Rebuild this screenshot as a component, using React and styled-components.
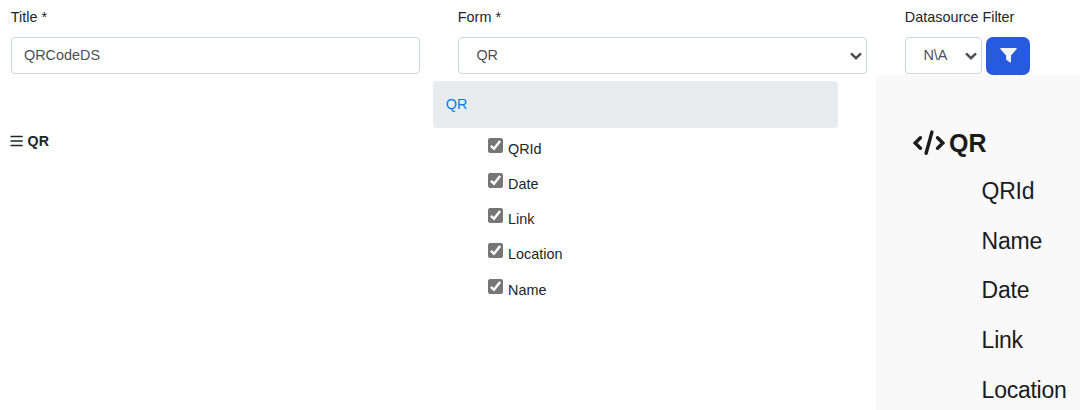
import React from 'react';
import styled, { createGlobalStyle } from 'styled-components';

const GlobalStyle = createGlobalStyle`
  * { box-sizing: border-box; }
  body {
    margin: 0;
    background: #fff;
    color: #212529;
    font: 14.4px/22px "Liberation Sans", Arial, sans-serif;
    overflow: hidden;
  }
  svg { display: block; flex: none; }
`;

const Page = styled.main`
  height: 410px;
  display: flex;
  flex-direction: column;
`;

const Toolbar = styled.header`
  height: 75px;
  padding: 6px 0 0 11px;
  display: grid;
  grid-template-columns: 447px 447px 1fr;
`;

const Field = styled.div`
  display: flex;
  flex-direction: column;
  gap: 9px;
`;

const Label = styled.label`
  height: 22px;
  margin-left: -0.2px;
`;

const Controls = styled.div`
  display: flex;
  gap: 4px;
`;

const TextInput = styled.input`
  width: 409px;
  height: 37px;
  padding: 0 12px 2px;
  border: 1px solid #ced4da;
  border-radius: 4px;
  background: #fff;
  color: #495057;
  font: inherit;
  outline: none;
`;

const SelectBox = styled.div`
  width: ${(p) => p.$width}px;
  height: 37px;
  display: grid;
  align-items: center;
  color: #495057;

  > * { grid-area: 1 / 1; }
  > svg {
    justify-self: end;
    margin-right: 5px;
    pointer-events: none;
  }
`;

const NativeSelect = styled.select`
  appearance: none;
  width: 100%;
  height: 37px;
  padding: 0 0 2px 17.4px;
  border: 1px solid #ced4da;
  border-radius: 4px;
  background: #fff;
  color: inherit;
  font: inherit;
  outline: none;
`;

const FilterButton = styled.button`
  width: 44px;
  height: 38px;
  padding: 0 0 1px;
  border: 0;
  border-radius: 7px;
  background: #265be0;
  color: #f4f4f4;
  display: flex;
  align-items: center;
  justify-content: center;
`;

const Body = styled.div`
  flex: 1;
  min-height: 0;
  display: grid;
  grid-template-columns: 433px 443px 1fr;
`;

const Outline = styled.section`
  padding: 55px 0 0 10px;
`;

const OutlineItem = styled.div`
  display: flex;
  align-items: center;
  gap: 4.6px;
  font-size: 14.2px;
  font-weight: 700;
`;

const FormFields = styled.section`
  padding-top: 6px;
`;

const FormHeader = styled.div`
  width: 405px;
  height: 47px;
  padding: 0 12.8px 2px;
  display: flex;
  align-items: center;
  border-radius: 4px;
  background: #e9ecef;
  color: #007bff;
`;

const CheckList = styled.div`
  padding: 10px 0 0 55px;
`;

const CheckRow = styled.label`
  height: 35.14px;
  display: flex;
  align-items: flex-start;
  gap: 5px;
`;

const CheckBoxWrap = styled.span`
  display: grid;
  width: 15px;
  height: 15px;

  > * { grid-area: 1 / 1; }
  > svg { pointer-events: none; visibility: hidden; }
  > input:checked + svg { visibility: visible; }
`;

const CheckInput = styled.input`
  appearance: none;
  width: 15px;
  height: 15px;
  margin: 0;
  border: 1px solid #767676;
  border-radius: 2px;

  &:checked { background: #767676; }
`;

const Preview = styled.aside`
  padding: 52px 0 0 37px;
  background: #f9f9f9;
  color: #1b1b1b;
  overflow: hidden;
`;

const PreviewTitle = styled.div`
  height: 32px;
  display: flex;
  align-items: center;
  gap: 4px;
  font-size: 25px;
  font-weight: 700;
`;

const PreviewList = styled.div`
  padding: 8px 0 0 68.6px;
`;

const PreviewField = styled.div`
  height: 49.7px;
  font-size: 23px;
  line-height: 49.7px;
  letter-spacing: -0.25px;
  white-space: nowrap;
`;

const Chevron = () => (
  <svg width="12" height="8" viewBox="0 0 12 8" fill="none" stroke="currentColor" strokeWidth="2.5">
    <path d="M1 1.3 6 6.2 11 1.3" />
  </svg>
);

const FilterIcon = () => (
  <svg width="17" height="15" viewBox="0 0 17 15" fill="currentColor">
    <path d="M.9 0H16.1Q17.1.5 16.5 1.3L11 7.6V13.9Q10.8 14.8 10 14.4L6.6 12Q6.1 11.6 6.1 11V7.6L.5 1.3Q-.1.5.9 0Z" />
  </svg>
);

const MenuIcon = () => (
  <svg width="13" height="12" viewBox="0 0 13 12" stroke="currentColor" strokeWidth="1.7" strokeLinecap="round">
    <path d="M1.2 1.5H12M1.2 6H12M1.2 10.5H12" />
  </svg>
);

const CodeIcon = () => (
  <svg width="32" height="26" viewBox="0 0 32 26" fill="none" stroke="currentColor" strokeWidth="3.4" strokeLinecap="round" strokeLinejoin="miter">
    <path d="M7.4 7.7 2.2 13 7.4 18.3M24.6 7.7 29.8 13 24.6 18.3" />
    <path d="M18.9 2.1 13.1 23.3" />
  </svg>
);

function Select({ id, width, value }) {
  return (
    <SelectBox $width={width}>
      <NativeSelect id={id}>
        <option>{value}</option>
      </NativeSelect>
      <Chevron />
    </SelectBox>
  );
}

function Checkbox() {
  return (
    <CheckBoxWrap>
      <CheckInput type="checkbox" defaultChecked />
      <svg width="15" height="15" viewBox="0 0 15 15" fill="none" stroke="#fff" strokeWidth="2.4">
        <path d="M2.9 7.8 6 10.7 12.1 2.9" />
      </svg>
    </CheckBoxWrap>
  );
}

const checks = ['QRId', 'Date', 'Link', 'Location', 'Name'];
const preview = ['QRId', 'Name', 'Date', 'Link', 'Location'];

export default function App() {
  return (
    <Page>
      <GlobalStyle />
      <Toolbar>
        <Field>
          <Label htmlFor="title">Title *</Label>
          <TextInput id="title" defaultValue="QRCodeDS" />
        </Field>
        <Field>
          <Label htmlFor="form">Form *</Label>
          <Select id="form" width={409} value="QR" />
        </Field>
        <Field>
          <Label htmlFor="filter">Datasource Filter</Label>
          <Controls>
            <Select id="filter" width={77} value="N\A" />
            <FilterButton aria-label="Filter">
              <FilterIcon />
            </FilterButton>
          </Controls>
        </Field>
      </Toolbar>
      <Body>
        <Outline>
          <OutlineItem>
            <MenuIcon />
            QR
          </OutlineItem>
        </Outline>
        <FormFields>
          <FormHeader>QR</FormHeader>
          <CheckList>
            {checks.map((name) => (
              <CheckRow key={name}>
                <Checkbox />
                <span>{name}</span>
              </CheckRow>
            ))}
          </CheckList>
        </FormFields>
        <Preview>
          <PreviewTitle>
            <CodeIcon />
            QR
          </PreviewTitle>
          <PreviewList>
            {preview.map((name) => (
              <PreviewField key={name}>{name}</PreviewField>
            ))}
          </PreviewList>
        </Preview>
      </Body>
    </Page>
  );
}
